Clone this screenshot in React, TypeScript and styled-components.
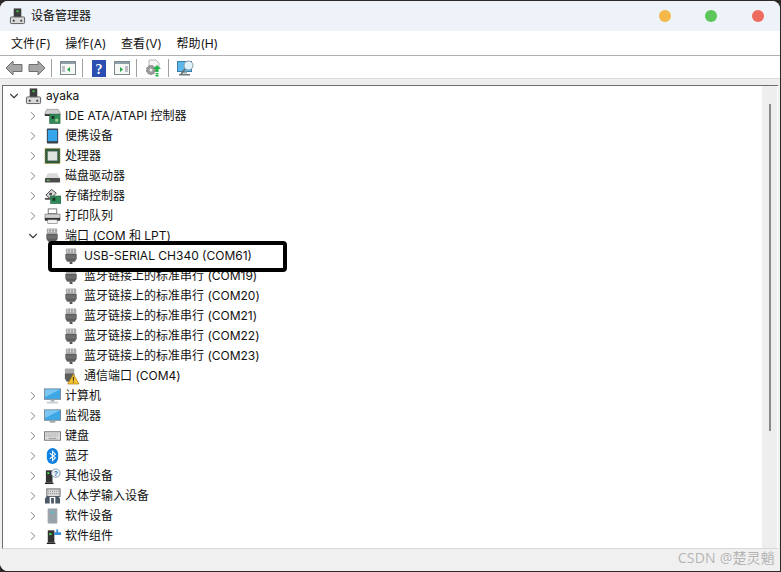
import React from 'react'
import styled, { createGlobalStyle } from 'styled-components'
import { ChevronDown, ChevronRight } from 'lucide-react'

const FONT = 'Inter, "Noto Sans CJK SC", sans-serif'

const GlobalStyle = createGlobalStyle`
  html, body {
    margin: 0;
    padding: 0;
    width: 781px;
    height: 572px;
    overflow: hidden;
    background: #2b2a29;
  }
`

const Window = styled.div`
  position: relative;
  width: 780px;
  height: 570px;
  margin-top: 1px;
  display: flex;
  flex-direction: column;
  background: #f0f0f0;
  border-radius: 8px 8px 0 8px;
  overflow: hidden;
  font-family: ${FONT};
  color: #111;
`

const TitleBar = styled.div`
  height: 30px;
  flex: none;
  display: flex;
  align-items: center;
  background: #eef2f9;
  padding: 0 16px 0 9px;
`

const TitleIcon = styled.span`
  width: 18px;
  height: 18px;
  flex: none;
  display: flex;
`

const TitleText = styled.span`
  font-size: 12px;
  line-height: 20px;
  margin-left: 4px;
  flex: 1;
`

const Dot = styled.span<{ $color: string; $gap: number }>`
  width: 12px;
  height: 12px;
  border-radius: 50%;
  background: ${({ $color }) => $color};
  margin-left: ${({ $gap }) => $gap}px;
`

const MenuBar = styled.div`
  height: 25px;
  flex: none;
  display: flex;
  align-items: center;
  gap: 14.5px;
  padding: 2px 0 0 11px;
  box-sizing: border-box;
  background: #fff;
  border-bottom: 1px solid #b0b0b0;
  font-size: 12px;
  line-height: 20px;
`

const Toolbar = styled.div`
  height: 22px;
  flex: none;
  display: flex;
  align-items: center;
  background: #fff;
  padding: 2px 0 0 5px;
  box-sizing: border-box;
`

const ToolSep = styled.span<{ $left: number; $right: number }>`
  width: 1px;
  height: 18px;
  background: #a0a0a0;
  margin: 0 ${({ $right }) => $right}px 0 ${({ $left }) => $left}px;
`

const ToolSlot = styled.span<{ $gap: number }>`
  display: flex;
  margin-right: ${({ $gap }) => $gap}px;
`

const Band = styled.div`
  height: 7px;
  flex: none;
  background: #eeeeee;
  border-top: 1px solid #dcdcdc;
  box-sizing: border-box;
`

const Body = styled.div`
  height: 464px;
  flex: none;
  margin: 0 2px;
  display: flex;
  background: #fff;
  border-top: 1px solid #6e6e6e;
  border-left: 1px solid #6e6e6e;
  border-bottom: 1px solid #d8d8d8;
  box-sizing: border-box;
  overflow: hidden;
`

const Tree = styled.div`
  flex: 1;
  font-size: 12px;
  line-height: 20px;
`

const Row = styled.div<{ $level: number }>`
  height: 20px;
  display: flex;
  align-items: center;
  padding-left: ${({ $level }) => 2 + $level * 19}px;
`

const Arrow = styled.span`
  width: 16px;
  height: 16px;
  flex: none;
  display: flex;
  align-items: center;
  justify-content: center;
  padding-left: 1px;
  box-sizing: border-box;
  color: #404040;
`

const Leaf = styled.span`
  width: 16px;
  flex: none;
`

const IconBox = styled.span`
  width: 18px;
  height: 18px;
  flex: none;
  margin-left: 4px;
  display: flex;
`

const Label = styled.span`
  margin-left: 3px;
  white-space: nowrap;
`

const ScrollTrack = styled.div`
  width: 15px;
  flex: none;
  background: #eeeeee;
  margin-right: 1px;
  display: flex;
  justify-content: center;
  padding-top: 18px;
`

const ScrollThumb = styled.div`
  width: 2px;
  height: 327px;
  background: #8a8a8a;
`

const StatusBar = styled.div`
  flex: 1;
  background: #f0f0f0;
`

const Highlight = styled.div`
  position: absolute;
  left: 48px;
  top: 240px;
  width: 239px;
  height: 31px;
  box-sizing: border-box;
  border: 4px solid #000;
  border-radius: 4px;
`

const Watermark = styled.div`
  position: absolute;
  right: 5px;
  bottom: 3px;
  font-size: 14px;
  line-height: 20px;
  letter-spacing: 0.2px;
  color: rgba(165, 165, 165, 0.8);
  font-family: "Open Sans", "Noto Sans CJK SC", sans-serif;
`

const Svg = ({ children }: { children: React.ReactNode }) => (
  <svg width="17" height="18" viewBox="0 0 18 18">{children}</svg>
)

const Tower = () => (
  <Svg>
    <rect x="5" y="1" width="8" height="9" fill="#3c3c3c" />
    <rect x="8" y="3" width="2" height="2" fill="#3fd24a" />
    <rect x="1.500" y="10" width="15" height="7" rx="1" fill="#d9d9d9" stroke="#5a5a5a" />
    <rect x="4" y="13" width="2" height="2" fill="#444" />
    <rect x="12" y="13" width="2" height="2" fill="#444" />
  </Svg>
)

const Port = () => (
  <Svg>
    <rect x="3" y="1" width="11" height="6" rx="1" fill="#a8a8a8" />
    <path d="M4.500 2.500h1M7.500 2.500h1M10.500 2.500h1M4.500 4.500h1M7.500 4.500h1M10.500 4.500h1" stroke="#fff" />
    <path d="M2.500 7h12v5l-2 3h-8l-2-3z" fill="#5c5c5c" />
    <path d="M3.500 9h10M3.500 11h10" stroke="#808080" />
    <rect x="7" y="15" width="3" height="2.500" fill="#555" />
  </Svg>
)

const PortWarn = () => (
  <Svg>
    <rect x="2" y="1" width="10" height="5" rx="1" fill="#a8a8a8" />
    <path d="M2 6h10v6l-2 3H4l-2-3z" fill="#5c5c5c" />
    <path d="M11 7l6 10.500H5z" fill="#f4c430" stroke="#a87a10" strokeWidth=".7" />
    <rect x="10.500" y="10" width="1" height="4" fill="#222" />
    <rect x="10.500" y="15" width="1" height="1" fill="#222" />
  </Svg>
)

const Ide = () => (
  <Svg>
    <path d="M3 2h12l2 4v2H1V6z" fill="#cfcfcf" stroke="#777" strokeWidth=".6" />
    <rect x="1" y="7" width="7" height="2" fill="#333" />
    <rect x="6" y="7" width="11" height="10" fill="#2f8a57" stroke="#1e5d3a" strokeWidth=".6" />
    <rect x="8" y="9" width="3" height="3" fill="#1d2f24" />
    <rect x="12" y="12" width="3" height="3" fill="#9bd18d" />
  </Svg>
)

const Portable = () => (
  <Svg>
    <rect x="3" y="1" width="12" height="16" rx="1" fill="#3b3f46" />
    <rect x="4" y="2.500" width="10" height="12" fill="#35a5ec" />
  </Svg>
)

const Cpu = () => (
  <Svg>
    <rect x="1" y="1" width="16" height="16" fill="#2f5d3a" stroke="#b9a24a" strokeDasharray="1 1" />
    <rect x="4" y="4" width="10" height="10" fill="#dfe4df" stroke="#889" strokeWidth=".5" />
  </Svg>
)

const Disk = () => (
  <Svg>
    <path d="M4 6h10l3 6H1z" fill="#dadada" />
    <rect x="1" y="11" width="16" height="5" rx="1" fill="#4c4c4c" />
    <rect x="3" y="13" width="3" height="1" fill="#6fe06f" />
  </Svg>
)

const Storage = () => (
  <Svg>
    <path d="M2 8l6-6 5 4-6 6z" fill="#d8d8d8" stroke="#444" />
    <circle cx="7" cy="7" r="1.500" fill="#444" />
    <rect x="1" y="11" width="6" height="2" fill="#555" />
    <rect x="7" y="9" width="11" height="8" fill="#2f8a57" stroke="#1e5d3a" strokeWidth=".6" />
    <rect x="9" y="11" width="3" height="3" fill="#1d2f24" />
  </Svg>
)

const Printer = () => (
  <Svg>
    <rect x="4.500" y="1.500" width="9" height="5" fill="#fff" stroke="#777" />
    <path d="M1 7h16v6H1z" fill="#cfcfcf" stroke="#666" strokeWidth=".6" />
    <rect x="1" y="11" width="16" height="3" fill="#333" />
    <rect x="4" y="13" width="10" height="4" fill="#f4f4f4" stroke="#666" strokeWidth=".6" />
  </Svg>
)

const Computer = () => (
  <Svg>
    <rect x="0.500" y="1.500" width="17" height="11" fill="#3ea8e6" stroke="#7a8794" />
    <path d="M1 2h16L1 10z" fill="#7cc7f2" />
    <rect x="7" y="13" width="4" height="2" fill="#a8b2ba" />
    <rect x="3" y="15" width="12" height="2" fill="#c9d0d6" />
  </Svg>
)

const Monitor = () => (
  <Svg>
    <rect x="0.500" y="2.500" width="17" height="11" fill="#3ea8e6" stroke="#7a8794" />
    <path d="M1 3h16L1 11z" fill="#7cc7f2" />
    <rect x="6" y="14" width="6" height="2" fill="#9aa4ac" />
  </Svg>
)

const Keyboard = () => (
  <Svg>
    <rect x="0.500" y="4.500" width="17" height="9" fill="#dcdcdc" stroke="#777" />
    <path d="M2 7h14M2 9h14" stroke="#999" strokeDasharray="1 1" />
    <rect x="5" y="11" width="8" height="1" fill="#999" />
  </Svg>
)

const Bluetooth = () => (
  <Svg>
    <rect x="3" y="0.500" width="12" height="17" rx="6" fill="#1081e0" />
    <path d="M6 6l6 5-3 3V4l3 3-6 5" fill="none" stroke="#fff" strokeWidth="1.100" />
  </Svg>
)

const Other = () => (
  <Svg>
    <rect x="2" y="3" width="7" height="13" fill="#333" />
    <rect x="3.500" y="5" width="2" height="2" fill="#45e050" />
    <rect x="1" y="16" width="9" height="1.500" fill="#222" />
    <circle cx="12.500" cy="6" r="4.500" fill="#eef3f8" stroke="#8aa0b4" />
    <text x="12.500" y="9" fontSize="8" fontWeight="700" textAnchor="middle" fill="#2a6fb0" fontFamily="Liberation Sans, sans-serif">?</text>
  </Svg>
)

const Hid = () => (
  <Svg>
    <rect x="3" y="1.500" width="14" height="8" fill="#dcdcdc" stroke="#666" />
    <path d="M4.500 4h11M4.500 6.500h11" stroke="#777" strokeDasharray="1 1" />
    <path d="M1 17v-5l2-3h3v8zM7.500 17v-6h3v6zM12 17V9h3l2 3v5z" fill="#4c5a68" />
  </Svg>
)

const SoftDev = () => (
  <Svg>
    <rect x="4" y="1" width="10" height="16" rx="1" fill="#98a2aa" stroke="#c8ced2" strokeWidth=".6" />
    <rect x="8" y="4" width="2" height="2" fill="#3fd0d8" />
  </Svg>
)

const SoftComp = () => (
  <Svg>
    <rect x="4" y="3" width="7" height="13" fill="#333" />
    <rect x="5.500" y="6" width="2.500" height="2" fill="#45e050" />
    <rect x="3" y="16" width="9" height="1.500" fill="#222" />
    <path d="M11 5h2V2h2v3h3v3h-7z" fill="#3b8fd8" />
  </Svg>
)

const ArrowTool = ({ flip }: { flip?: boolean }) => (
  <svg width="18" height="16" viewBox="0 0 18 16" style={flip ? { transform: 'scaleX(-1)' } : undefined}>
    <path d="M1 8l7-7v3.500h9v7H8V15z" fill="#a6a6a6" stroke="#6e6e6e" />
  </svg>
)

const PaneTool = ({ right }: { right?: boolean }) => (
  <svg width="16" height="14" viewBox="0 0 16 14">
    <rect x="0.500" y="0.500" width="15" height="13" fill="#f5f8f5" stroke="#7c8a90" />
    <rect x="1" y="1" width="14" height="2" fill="#8fa0a8" />
    <path d={right ? 'M6 6l3 2.500-3 2.500z' : 'M10 6L7 8.500l3 2.500z'} fill="#22a84a" />
    <path d={right ? 'M11 6h3M11 8h3M11 10h3' : 'M2 6h3M2 8h3M2 10h3'} stroke="#889" />
  </svg>
)

const HelpTool = () => (
  <svg width="14" height="17" viewBox="0 0 14 17">
    <rect width="14" height="17" fill="#2a4fb0" />
    <text x="7" y="14" fontSize="14" fontWeight="700" textAnchor="middle" fill="#fff" fontFamily="Liberation Serif, serif">?</text>
  </svg>
)

const UpdateTool = () => (
  <svg width="16" height="18" viewBox="0 0 16 18">
    <path d="M4 1h7l3 3v6H4z" fill="#f4f4f4" stroke="#b5b5b5" />
    <circle cx="6" cy="11" r="4.500" fill="#9a9a9a" stroke="#777" strokeDasharray="2 1" />
    <circle cx="6" cy="11" r="1.500" fill="#eee" />
    <path d="M12 6l4 4h-2.500v3h-3v-3H8z" fill="#22b54a" />
    <rect x="10.500" y="14" width="3" height="1.500" fill="#22b54a" />
    <rect x="10.500" y="16" width="3" height="1.500" fill="#22b54a" />
  </svg>
)

const ScanTool = () => (
  <svg width="18" height="17" viewBox="0 0 18 17">
    <rect x="0.500" y="1.500" width="14" height="10" fill="#5cb8ea" stroke="#3b7fa8" />
    <rect x="5" y="11.500" width="5" height="2" fill="#9aa" />
    <rect x="2" y="14" width="11" height="1.500" fill="#6c7a80" />
    <circle cx="11.500" cy="5.500" r="4.500" fill="#dff2fb" stroke="#8a9aa2" />
    <path d="M8 9l-4 5" stroke="#666" strokeWidth="1.500" />
  </svg>
)

type Node = { level: number; icon: React.ComponentType; label: string; open?: boolean; leaf?: boolean }

const BT = '蓝牙链接上的标准串行'

const NODES: Node[] = [
  { level: 0, icon: Tower, label: 'ayaka', open: true },
  { level: 1, icon: Ide, label: 'IDE ATA/ATAPI 控制器' },
  { level: 1, icon: Portable, label: '便携设备' },
  { level: 1, icon: Cpu, label: '处理器' },
  { level: 1, icon: Disk, label: '磁盘驱动器' },
  { level: 1, icon: Storage, label: '存储控制器' },
  { level: 1, icon: Printer, label: '打印队列' },
  { level: 1, icon: Port, label: '端口 (COM 和 LPT)', open: true },
  { level: 2, icon: Port, label: 'USB-SERIAL CH340 (COM61)', leaf: true },
  { level: 2, icon: Port, label: `${BT} (COM19)`, leaf: true },
  { level: 2, icon: Port, label: `${BT} (COM20)`, leaf: true },
  { level: 2, icon: Port, label: `${BT} (COM21)`, leaf: true },
  { level: 2, icon: Port, label: `${BT} (COM22)`, leaf: true },
  { level: 2, icon: Port, label: `${BT} (COM23)`, leaf: true },
  { level: 2, icon: PortWarn, label: '通信端口 (COM4)', leaf: true },
  { level: 1, icon: Computer, label: '计算机' },
  { level: 1, icon: Monitor, label: '监视器' },
  { level: 1, icon: Keyboard, label: '键盘' },
  { level: 1, icon: Bluetooth, label: '蓝牙' },
  { level: 1, icon: Other, label: '其他设备' },
  { level: 1, icon: Hid, label: '人体学输入设备' },
  { level: 1, icon: SoftDev, label: '软件设备' },
  { level: 1, icon: SoftComp, label: '软件组件' },
]

const App = () => (
  <>
    <GlobalStyle />
    <Window>
      <TitleBar>
        <TitleIcon><Tower /></TitleIcon>
        <TitleText>设备管理器</TitleText>
        <Dot $color="#f4b84a" $gap={0} />
        <Dot $color="#5cc65a" $gap={34} />
        <Dot $color="#ee6a5e" $gap={35} />
      </TitleBar>
      <MenuBar>
        <span>文件(F)</span>
        <span>操作(A)</span>
        <span>查看(V)</span>
        <span>帮助(H)</span>
      </MenuBar>
      <Toolbar>
        <ToolSlot $gap={5}><ArrowTool /></ToolSlot>
        <ToolSlot $gap={0}><ArrowTool flip /></ToolSlot>
        <ToolSep $left={5} $right={8} />
        <ToolSlot $gap={0}><PaneTool /></ToolSlot>
        <ToolSep $left={6} $right={9} />
        <ToolSlot $gap={8}><HelpTool /></ToolSlot>
        <ToolSlot $gap={0}><PaneTool right /></ToolSlot>
        <ToolSep $left={6} $right={8} />
        <ToolSlot $gap={0}><UpdateTool /></ToolSlot>
        <ToolSep $left={7} $right={8} />
        <ToolSlot $gap={0}><ScanTool /></ToolSlot>
      </Toolbar>
      <Band />
      <Body>
        <Tree>
          {NODES.map(({ level, icon: Icon, label, open, leaf }) => (
            <Row key={label} $level={level}>
              {leaf ? <Leaf /> : (
                <Arrow>
                  {open ? <ChevronDown size={14} strokeWidth={2} /> : <ChevronRight size={14} strokeWidth={1.6} color="#777" />}
                </Arrow>
              )}
              <IconBox><Icon /></IconBox>
              <Label>{label}</Label>
            </Row>
          ))}
        </Tree>
        <ScrollTrack><ScrollThumb /></ScrollTrack>
      </Body>
      <StatusBar />
      <Highlight />
      <Watermark>CSDN @楚灵魈</Watermark>
    </Window>
  </>
)

export default App
